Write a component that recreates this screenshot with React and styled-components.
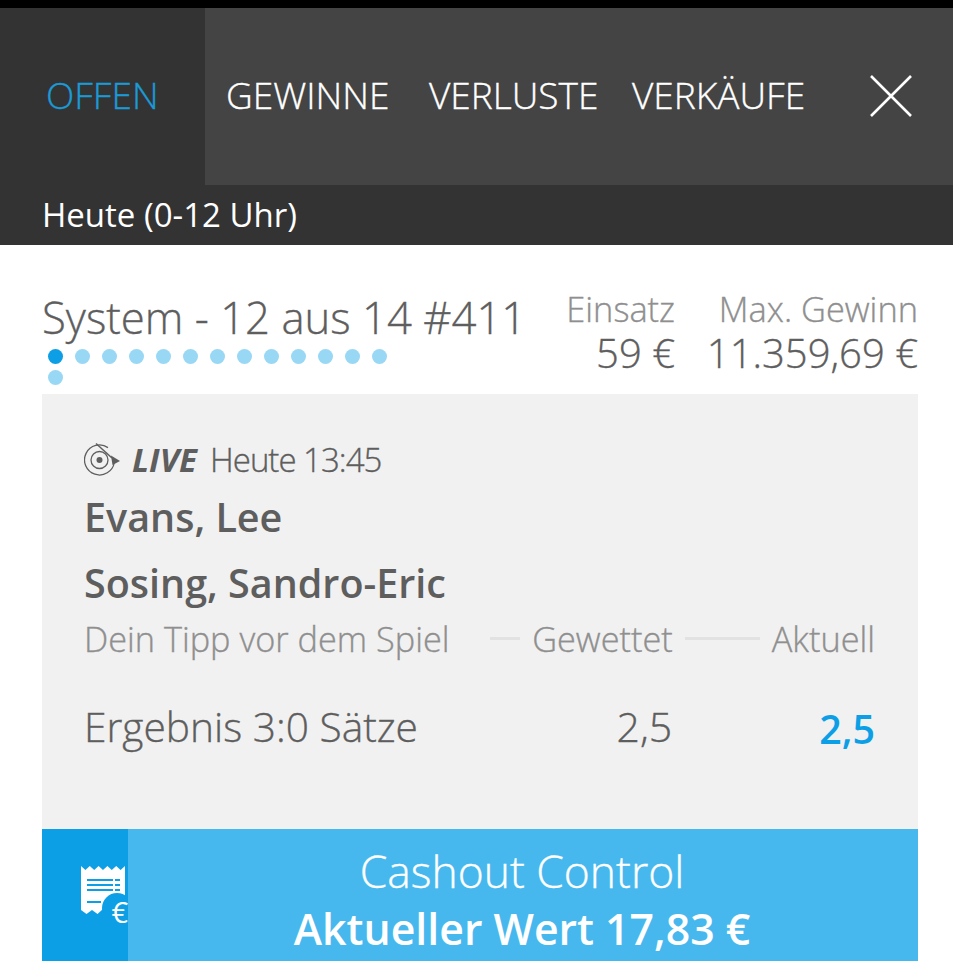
import React from 'react'
import styled, { createGlobalStyle, css } from 'styled-components'

const GlobalStyle = createGlobalStyle`
    html, body {
        margin:0;
        padding:0;
        background:#ffffff;
        font-family:"Open Sans", "Noto Sans", sans-serif;
    }
    * { box-sizing:border-box; }
`

// the screenshot's thin text sits between Light and Regular
const thinText = css`
    font-weight:300;
    -webkit-text-stroke:0.35px currentColor;
`

const tabs = ['GEWINNE', 'VERLUSTE', 'VERKÄUFE']

const dots = Array.from({ length: 14 })

const LiveIcon = () => (
    <svg width="38" height="34" viewBox="0 0 38 34" fill="none" stroke="#5e5e5e">
        <path d="M24 5.600A15 15 0 1 0 30.300 20.500" strokeWidth="1.300" />
        <circle cx="15.500" cy="18" r="8.500" strokeWidth="1.300" />
        <circle cx="15.500" cy="18" r="3" fill="#5e5e5e" stroke="none" />
        <path d="M12 1.500l16 14.500" strokeWidth="1.500" />
        <path d="M36 19l-9-5.500 1.500 9.500z" fill="#5e5e5e" stroke="none" />
    </svg>
)

const ReceiptIcon = () => (
    <svg width="47" height="60" viewBox="0 0 47 60">
        <path d="M0 1l4.400 4 4.400-4 4.400 4 4.400-4 4.400 4 4.400-4 4.400 4 4.400-4 4.400 4 4.400-4V30L22 44l-5.500 5-5.500-4-5.500 4L0 45z" fill="#ffffff" />
        <path d="M6 14h26v2H6zM6 19h26v2H6zM6 24h26v2H6zM34 14h5v2h-5zM34 19h5v2h-5zM34 24h5v2h-5zM6 36h14v2H6z" fill="#0d9fe6" />
        <circle cx="36" cy="43" r="15" fill="#0d9fe6" />
    </svg>
)

const App = () => {
    return (
        <Page>
            <GlobalStyle />
            <StatusBar />
            <TabBar>
                <ActiveTab>OFFEN</ActiveTab>
                {tabs.map(tab => (
                    <Tab key={tab}>{tab}</Tab>
                ))}
                <CloseButton>
                    <svg width="44" height="44" viewBox="0 0 44 44" stroke="#ffffff" strokeWidth="2.600">
                        <path d="M2 2l40 40M42 2L2 42" />
                    </svg>
                </CloseButton>
            </TabBar>
            <SubBar>Heute (0-12 Uhr)</SubBar>
            <Content>
                <Summary>
                    <div>
                        <Title>System - 12 aus 14 #411</Title>
                        <Dots>
                            {dots.map((_, i) => <Dot key={i} $active={i === 0} />)}
                        </Dots>
                    </div>
                    <Stat $width={108}>
                        <StatLabel>Einsatz</StatLabel>
                        <StatValue>59 €</StatValue>
                    </Stat>
                    <Stat $width={243}>
                        <StatLabel>Max. Gewinn</StatLabel>
                        <StatValue>11.359,69 €</StatValue>
                    </Stat>
                </Summary>
                <Card>
                    <LiveRow>
                        <LiveIcon />
                        <LiveLabel>LIVE</LiveLabel>
                        <LiveTime>Heute 13:45</LiveTime>
                    </LiveRow>
                    <Player>Evans, Lee</Player>
                    <Player $second>Sosing, Sandro-Eric</Player>
                    <TipHead>
                        <TipLabel>Dein Tipp vor dem Spiel</TipLabel>
                        <Rule $width={30} $first />
                        <TipLabel>Gewettet</TipLabel>
                        <Rule $width={75} />
                        <TipLabel>Aktuell</TipLabel>
                    </TipHead>
                    <ResultRow>
                        <ResultName>Ergebnis 3:0 Sätze</ResultName>
                        <ResultOdd>2,5</ResultOdd>
                        <CurrentOdd>2,5</CurrentOdd>
                    </ResultRow>
                </Card>
                <Cashout>
                    <CashoutIcon>
                        <ReceiptIcon />
                        <Euro>€</Euro>
                    </CashoutIcon>
                    <CashoutText>
                        <CashoutTitle>Cashout Control</CashoutTitle>
                        <CashoutValue>Aktueller Wert 17,83 €</CashoutValue>
                    </CashoutText>
                </Cashout>
            </Content>
        </Page>
    )
}

export default App

const Page = styled.div`
    width:953px;
    height:968px;
    overflow:hidden;
    background:#ffffff;
`

const StatusBar = styled.div`
    height:8px;
    background:#000000;
`

const TabBar = styled.div`
    height:177px;
    display:flex;
    background:#444444;
    color:#ffffff;
`

const ActiveTab = styled.div`
    width:205px;
    padding:0 0 4px 46px;
    display:flex;
    align-items:center;
    background:#333333;
    color:#1b9ad6;
    font-size:37px;
    ${thinText}
`

const Tab = styled.div`
    width:203px;
    padding:0 0 4px 21px;
    display:flex;
    align-items:center;
    font-size:37px;
    white-space:nowrap;
    ${thinText}
`

const CloseButton = styled.div`
    margin-left:55px;
    display:flex;
    align-items:center;
    padding-bottom:2px;
`

const SubBar = styled.div`
    height:60px;
    padding:0 0 1px 42px;
    display:flex;
    align-items:center;
    background:#333333;
    color:#ffffff;
    font-size:33px;
    font-weight:400;
`

const Content = styled.div`
    padding:0 35px 0 42px;
`

const Summary = styled.div`
    height:149px;
    padding-top:45px;
    display:flex;
    color:#5e5e5e;
    > div:first-child {
        flex:1;
    }
`

const Title = styled.div`
    font-size:43.700px;
    line-height:54px;
    white-space:nowrap;
    ${thinText}
`

const Dots = styled.div`
    width:350px;
    margin-top:5px;
    display:flex;
    flex-wrap:wrap;
    gap:6px 12px;
    padding-left:6px;
`

const Dot = styled.span`
    width:15px;
    height:15px;
    border-radius:50%;
    background:${props => props.$active ? '#0d9fe6' : '#98d8f5'};
`

const Stat = styled.div`
    width:${props => props.$width}px;
    display:flex;
    flex-direction:column;
    align-items:flex-end;
    white-space:nowrap;
`

const StatLabel = styled.div`
    color:#8f8f8f;
    font-size:34.400px;
    line-height:38px;
    ${thinText}
`

const StatValue = styled.div`
    font-size:40px;
    line-height:50px;
    ${thinText}
`

const Card = styled.div`
    height:435px;
    padding:47px 43px 0 42px;
    background:#f1f1f1;
    color:#5e5e5e;
`

const LiveRow = styled.div`
    height:36px;
    display:flex;
    align-items:center;
`

const LiveLabel = styled.span`
    margin-left:10px;
    font-size:33px;
    font-weight:700;
    font-style:italic;
`

const LiveTime = styled.span`
    margin-left:13px;
    font-size:33px;
    letter-spacing:-1px;
    ${thinText}
`

const Player = styled.div`
    margin-top:${props => props.$second ? '19px' : '17px'};
    font-size:39.500px;
    font-weight:600;
    line-height:47px;
`

const TipHead = styled.div`
    margin-top:8px;
    display:flex;
    align-items:center;
    gap:12px;
`

const TipLabel = styled.span`
    color:#8f8f8f;
    font-size:34.300px;
    white-space:nowrap;
    ${thinText}
`

const Rule = styled.span`
    width:${props => props.$width}px;
    height:3px;
    margin-left:${props => props.$first ? 'auto' : '0'};
    background:#e2e2e2;
`

const ResultRow = styled.div`
    margin-top:33px;
    display:flex;
    align-items:center;
`

const ResultName = styled.div`
    flex:1;
    font-size:40.700px;
    ${thinText}
`

const ResultOdd = styled.div`
    margin-right:147px;
    font-size:41px;
    ${thinText}
`

const CurrentOdd = styled.div`
    margin-top:7px;
    color:#0d9fe6;
    font-size:39.400px;
    font-weight:600;
`

const Cashout = styled.div`
    height:132px;
    display:flex;
    background:#47b8ee;
    color:#ffffff;
`

const CashoutIcon = styled.div`
    position:relative;
    width:86px;
    padding:36px 0 0 39px;
    background:#0d9fe6;
    overflow:hidden;
`

const Euro = styled.span`
    position:absolute;
    right:0;
    top:66px;
    font-size:29px;
    font-weight:400;
    line-height:34px;
`

const CashoutText = styled.div`
    flex:1;
    padding:13px 2px 0 0;
    display:flex;
    flex-direction:column;
    align-items:center;
`

const CashoutTitle = styled.div`
    font-size:44.400px;
    line-height:58px;
    ${thinText}
`

const CashoutValue = styled.div`
    font-size:42.800px;
    font-weight:600;
    line-height:58px;
`
